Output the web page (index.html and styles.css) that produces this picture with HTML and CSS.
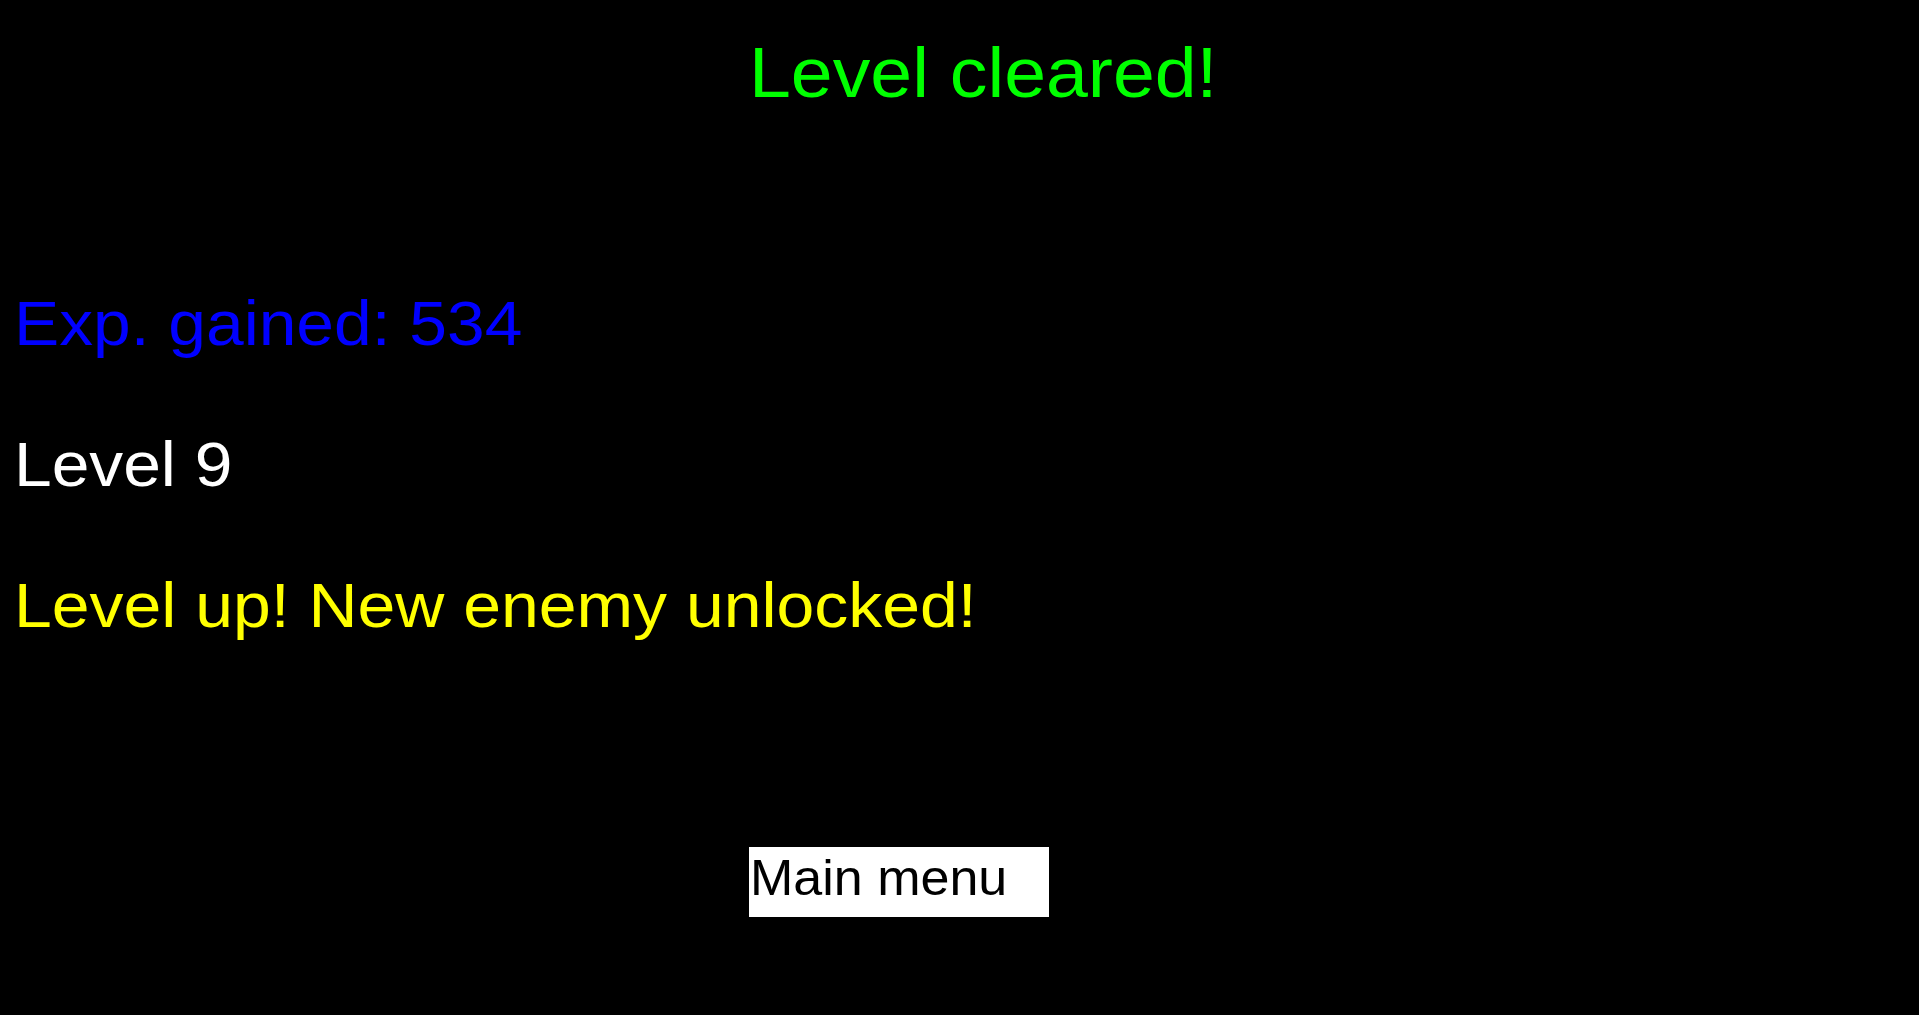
FILE: index.html
```html
<!DOCTYPE html>
<html lang="en">
  <head>
    <meta charset="UTF-8" />
    <meta name="viewport" content="width=device-width, initial-scale=1.0" />
    <title>Level cleared</title>
    <link rel="stylesheet" href="styles.css">
  </head>
  <body>
    <div class="screen">
      <h1 class="title"><span class="wide">Level cleared!</span></h1>

      <div class="results">
        <p class="line exp wide">Exp. gained: <span id="exp">534</span></p>
        <p class="line level wide">Level <span id="level">9</span></p>
        <p class="line unlock wide">Level up! New enemy unlocked!</p>
      </div>

      <div class="actions">
        <button class="menuBtn" type="button"><span class="btnText">Main menu</span></button>
      </div>
    </div>
  </body>
</html>
```

FILE: styles.css
```css
html,
body {
  margin: 0;
  background: #000000;
}
body {
  font-family: "Liberation Sans", Arial, sans-serif;
}

.screen {
  display: flex;
  flex-direction: column;
  height: 1015px;
  padding-top: 38px;
  box-sizing: border-box;
}

/* the game font is a little wider than Arial */
.wide {
  display: inline-block;
  transform: scaleX(1.075);
  transform-origin: left center;
}

.title {
  margin: 0;
  padding-left: 749px;
  font-size: 70px;
  font-weight: normal;
  line-height: 70px;
  color: #00ff00;
}

.results {
  display: flex;
  flex-direction: column;
  align-items: flex-start;
  gap: 78px;
  margin-top: 184px;
  padding-left: 14px;
}
.line {
  margin: 0;
  font-size: 63px;
  line-height: 63px;
}
.exp {
  color: #0000ff;
}
.level {
  color: #ffffff;
}
.unlock {
  color: #ffff00;
}
.unlock.wide {
  transform: scaleX(1.078);
}

.actions {
  margin-top: 210px;
  padding-left: 749px;
}
.menuBtn {
  display: block;
  width: 300px;
  height: 70px;
  box-sizing: border-box;
  margin: 0;
  padding: 6px 0 14px 0;
  border: none;
  border-radius: 0;
  background: #ffffff;
  color: #000000;
  font-family: inherit;
  font-size: 50px;
  line-height: 50px;
  text-align: left;
}
.btnText {
  display: inline-block;
  transform: scaleX(1.04);
  transform-origin: left center;
  padding-left: 1px;
}
```
